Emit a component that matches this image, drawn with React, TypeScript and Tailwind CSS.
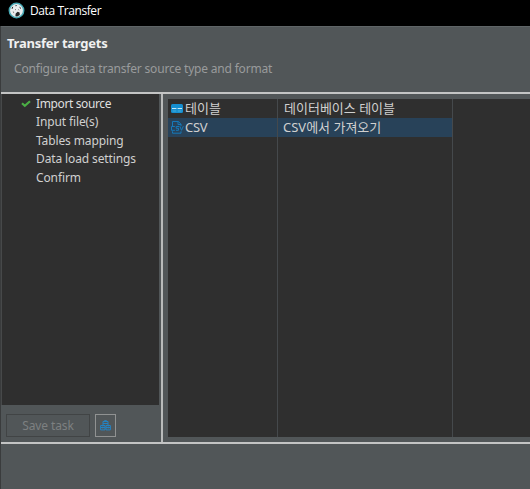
const steps = ['Input file(s)', 'Tables mapping', 'Data load settings', 'Confirm'];

function AppLogo() {
  return (
    <svg width="17" height="17" viewBox="0 0 17 17" className="shrink-0">
      <circle cx="8.5" cy="8.5" r="7.2" fill="#e9edee" stroke="#49a9b5" strokeWidth="1.5" />
      <path d="M4 5.2 5.2 4.6l-.4 1.8-1.2.6ZM7.2 3.4l1.4-.3.2.8-1.2.3ZM11.2 4.6l1.4.8.4 1.6-.9-.4ZM7.4 13.4l.3-2 1.9-1.6 2 .7.2 2.4-2 1.4-2 .1Z" fill="#242627" />
      <path d="M7 7.6h1M10.2 7.4l1 .8M5.3 9.5l.5 1.6" stroke="#5d514e" strokeWidth=".7" />
    </svg>
  );
}

function TableIcon() {
  return (
    <svg width="12" height="9" viewBox="0 0 12 9" className="shrink-0">
      <rect width="12" height="9" rx="1.5" fill="#168fd0" />
      <path d="M1 4h4.4v1H1ZM6.6 4H11v1H6.6Z" fill="#c4e7f4" />
      <path d="M1.6 6.4h3.6v1H1.6ZM6.8 6.4h3.6v1H6.8Z" fill="#45acd9" />
    </svg>
  );
}

function CsvIcon() {
  return (
    <svg width="13" height="13" viewBox="0 0 13 13" className="shrink-0" fill="none" stroke="#1679b8" strokeWidth="1">
      <path d="M1.5 5V.5h6l2.5 2.8V5M7 .5v3h3M1.5 10.3v1.9H10v-1.9" />
      <path d="M3.9 5.5H.5v3.8h3.4M8 5.5H5.2v1.8h2.3v2H4.9M8.8 5.2l1.7 4.1 1.8-4.1" />
    </svg>
  );
}

function TaskIcon() {
  return (
    <svg width="11" height="11" viewBox="0 0 11 11" fill="none" stroke="#2482c2" strokeWidth="1">
      <path d="M3 5V1.5h5V5M4.5 1.5V.6h2v.9M.6 5.5h4.4v4.4H.6ZM6 5.5h4.4v4.4H6ZM.6 7.5H5M6 7.5h4.4M3 3.5h5M2.8 6.5v2M8.2 6.5v2" />
    </svg>
  );
}

export default function App() {
  return (
    <div className="flex h-[489px] w-[530px] flex-col overflow-hidden bg-[#515658] font-['Noto_Sans','Noto_Sans_CJK_KR',sans-serif] text-[12px] whitespace-nowrap text-[#d0d0d0]">
      <header className="flex h-[26px] shrink-0 items-start gap-[5px] bg-black pt-[2px] pl-[8px] text-white">
        <AppLogo />
        <span className="font-['Open_Sans',sans-serif] leading-[18px] tracking-[-0.4px]">Data Transfer</span>
      </header>
      <div className="flex min-h-0 flex-1 flex-col border-l border-[#3a3c3d]">
        <section className="flex h-[68px] shrink-0 flex-col border-t border-b-2 border-t-[#5f6567] border-b-[#c3c4c4] pt-[7px] pl-[6px]">
          <h1 className="text-[13px] leading-[18px] font-bold tracking-[-0.25px] text-[#f0f0f0]">Transfer targets</h1>
          <p className="mt-[8px] pl-[7px] leading-[18px] tracking-[-0.19px] text-[#999b9c]">Configure data transfer source type and format</p>
        </section>
        <div className="flex h-[350px] shrink-0 border-b-2 border-[#c3c4c4]">
          <aside className="flex w-[160px] shrink-0 flex-col">
            <nav className="flex h-[311px] w-[158px] flex-col border-l border-[#47494a] bg-[#2f2f2f] pt-px leading-[18.4px] tracking-[-0.12px]">
              <div className="flex items-center pl-[19px] tracking-[-0.38px] text-[#dfdfdf]">
                <svg width="10" height="8" viewBox="0 0 10 8" className="mr-[5px]" fill="none" stroke="#4bae45" strokeWidth="2.2">
                  <path d="m1 3.2 2.8 2.6L9 1.2" />
                </svg>
                Import source
              </div>
              {steps.map((step) => <div key={step} className="pl-[34px]">{step}</div>)}
            </nav>
            <div className="flex gap-[5px] pt-[9px] pl-[5px]">
              <button className="h-[23px] w-[84px] border border-[#414445] pt-px tracking-[-0.1px] text-[#7d8081]">Save task</button>
              <button className="flex h-[23px] w-[21px] items-center justify-center border border-[#909292]"><TaskIcon /></button>
            </div>
          </aside>
          <main className="flex-1 border-l-2 border-[#b9bbbb] pt-[5px] pl-[5px]">
            <div className="grid h-[338px] grid-cols-[110px_175px_1fr] bg-[#2f2f2f] text-[13px]">
              <div className="border-r border-[#45494c]">
                <div className="flex h-[19px] items-center gap-[2px] pl-[3px]"><TableIcon /><span>테이블</span></div>
                <div className="flex h-[19px] items-center gap-[1px] bg-[#284259] pl-[3px]"><CsvIcon /><span className="tracking-[-0.3px]">CSV</span></div>
              </div>
              <div className="border-r border-[#45494c]">
                <div className="flex h-[19px] items-center pl-[6px]">데이터베이스 테이블</div>
                <div className="flex h-[19px] items-center bg-[#284259] pl-[5px]">CSV에서 가져오기</div>
              </div>
            </div>
          </main>
        </div>
      </div>
    </div>
  );
}
